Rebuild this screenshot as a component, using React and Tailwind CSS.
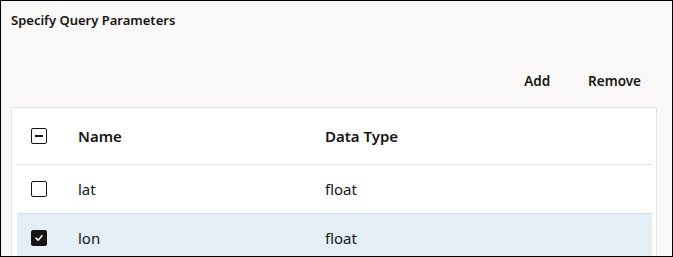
import React from 'react'

const rows = [
  { name: 'lat', type: 'float', selected: false },
  { name: 'lon', type: 'float', selected: true },
]

function Checkbox({ state }) {
  if (state === 'checked') {
    return (
      <span className="flex h-[16px] w-[16px] items-center justify-center rounded-[2px] bg-[#161513]">
        <svg width="10" height="10" viewBox="0 0 10 10" fill="none">
          <path d="M2 5.2 L4.1 7.2 L8 2.8" stroke="white" strokeWidth="1.6" strokeLinecap="round" strokeLinejoin="round" />
        </svg>
      </span>
    )
  }
  return (
    <span className="flex h-[16px] w-[16px] items-center justify-center rounded-[2px] border-[1.5px] border-[#161513] bg-white">
      {state === 'mixed' && <span className="h-[2px] w-[8px] bg-[#161513]" />}
    </span>
  )
}

export default function App() {
  return (
    <div
      className="h-[257px] w-[673px] overflow-hidden border border-black bg-[#f9f8f6] text-[#161513]"
      style={{ fontFamily: '"Noto Sans", "Open Sans", sans-serif' }}
    >
      <div className="px-[10px] pt-[10px] text-[13px] font-semibold leading-[18px]">
        Specify Query Parameters
      </div>

      {/* toolbar */}
      <div className="mt-[42px] flex justify-end pr-[31px] text-[13.5px] font-semibold leading-[20px]">
        <button className="mr-[38px]">Add</button>
        <button>Remove</button>
      </div>

      {/* table card */}
      <div className="ml-[10px] mr-[15px] mt-[16px] border border-[#e4e3e1] bg-white pl-[5px] pr-[4px]">
        <div className="grid h-[57px] grid-cols-[61px_247px_1fr] items-center border-b border-[#e2e2e2] text-[15px] font-semibold">
          <div className="pl-[14px]">
            <Checkbox state="mixed" />
          </div>
          <div>Name</div>
          <div>Data Type</div>
        </div>
        {rows.map((r) => (
          <div
            key={r.name}
            className={
              'grid h-[49px] grid-cols-[61px_247px_1fr] items-center border-b text-[15px] ' +
              (r.selected ? 'border-[#d2dee6] bg-[#e4eff5]' : 'border-[#d2dee6] bg-white')
            }
          >
            <div className="pl-[14px]">
              <Checkbox state={r.selected ? 'checked' : 'unchecked'} />
            </div>
            <div>{r.name}</div>
            <div>{r.type}</div>
          </div>
        ))}
      </div>
    </div>
  )
}
